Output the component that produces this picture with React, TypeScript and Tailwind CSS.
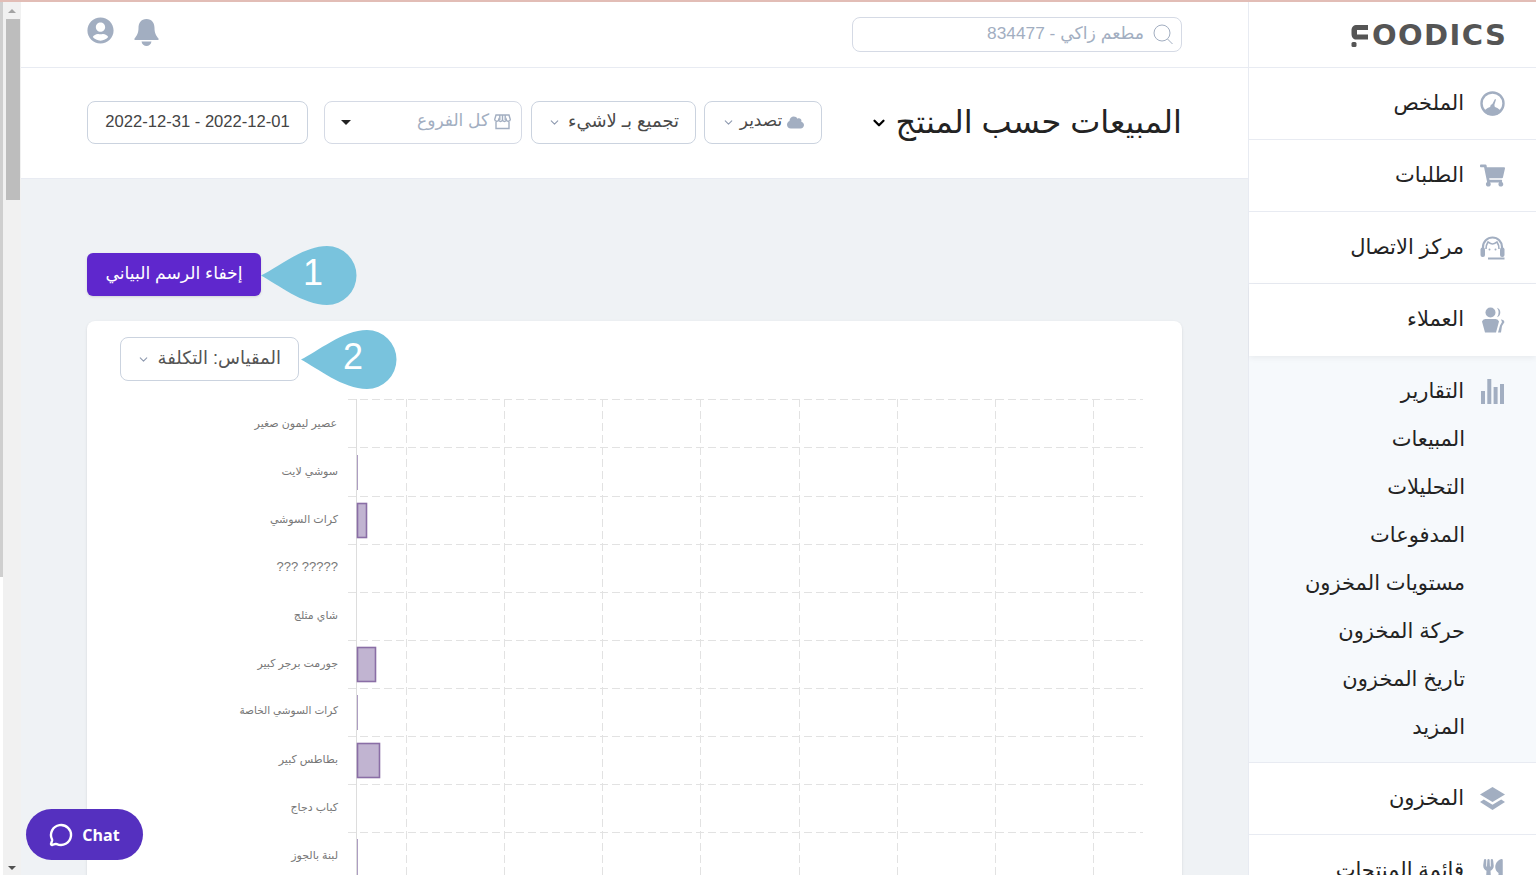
import React from 'react'
import { ChevronDown, MessageCircle } from 'lucide-react'
import { FaCloud, FaShoppingCart, FaUserCircle, FaUtensils } from 'react-icons/fa'

const GaugeIcon = () => (
  <svg width="25" height="25" viewBox="0 0 25 25" fill="none">
    <circle cx="12.5" cy="12.5" r="11" stroke="currentColor" strokeWidth="2.4" />
    <path d="M4 20.5a11 11 0 0 0 17 0a10 10 0 0 0-17 0Z" fill="currentColor" />
    <path d="M11 15.5l4-7.5 1 .5-2.5 8Z" fill="currentColor" />
    <circle cx="12.5" cy="15.5" r="2.2" fill="currentColor" />
  </svg>
)

const HeadsetIcon = () => (
  <svg width="25" height="24" viewBox="0 0 25 24" fill="none">
    <path d="M3 12.5V11a9.500 9.500 0 0 1 19 0v1.500" stroke="currentColor" strokeWidth="2.2" />
    <path d="M6 13C6 9.500 7 7.500 8 6c1.500 1 3 2 4.500 2s3-1 4.500-2c1 1.500 2 3.500 2 7" stroke="currentColor" strokeWidth="1.600" />
    <rect x="0.500" y="11.500" width="4.500" height="9.500" rx="2" fill="currentColor" />
    <rect x="20" y="11.500" width="4.500" height="9.500" rx="2" fill="currentColor" />
    <path d="M8 21.500h16.500v2H8Z" fill="currentColor" />
    <circle cx="9.500" cy="13.500" r="1" fill="currentColor" />
    <circle cx="15.500" cy="13.500" r="1" fill="currentColor" />
  </svg>
)

const UsersIcon = () => (
  <svg width="24" height="26" viewBox="0 0 24 26" fill="currentColor">
    <circle cx="9.500" cy="5.500" r="5" />
    <path d="M16 .800a5 5 0 0 1 0 9.400 8 8 0 0 0 0-9.400Z" />
    <path d="M1 14.500a3.500 3.500 0 0 1 3.500-2.500h10a3.500 3.500 0 0 1 3.500 2.500L15 25.500H4Z" />
    <path d="M20 12.500h.5a3 3 0 0 1 3 2.500l-2.500 4-1 6.500h-3l2-7 2-3.500Z" />
  </svg>
)

const BarsIcon = () => (
  <svg width="23" height="25" viewBox="0 0 23 25" fill="currentColor">
    <rect x="0" y="12" width="4" height="13" />
    <rect x="6.300" y="0" width="4" height="25" />
    <rect x="12.600" y="8" width="4" height="17" />
    <rect x="19" y="5" width="4" height="20" />
  </svg>
)

const LayersIcon = () => (
  <svg width="25" height="23" viewBox="0 0 25 23" fill="currentColor">
    <path d="M12.500 0L25 7.500 12.500 15 0 7.500Z" />
    <path d="M3.800 12.500l8.700 5.200 8.700-5.200L25 15 12.500 23 0 15Z" />
  </svg>
)

const BellIcon = () => (
  <svg width="25" height="27" viewBox="0 0 25 27" fill="currentColor">
    <path d="M12.500 0C18 0 20.500 4 20.500 9c0 5 1.500 7.500 4 10.500v1.500H.5v-1.500C3 16.500 4.500 14 4.500 9c0-5 2.500-9 8-9Z" />
    <path d="M7.500 22.500h10c-.5 2.800-2.500 4.500-5 4.500s-4.500-1.700-5-4.500Z" />
  </svg>
)

const StoreIcon = () => (
  <svg width="17" height="16" viewBox="0 0 17 16" fill="none" stroke="currentColor" strokeWidth="1.400">
    <path d="M2 1h13l1.300 4.500a2 2 0 0 1-3.900.4 2 2 0 0 1-3.900 0 2 2 0 0 1-3.900 0 2 2 0 0 1-3.900-.4Z" />
    <path d="M2 8v6.500h13V8M5.800 1v5M8.500 1v5M11.200 1v5" />
  </svg>
)

const SearchIcon = () => (
  <svg width="21" height="21" viewBox="0 0 21 21" fill="none" stroke="currentColor" strokeWidth="1">
    <circle cx="9" cy="9" r="8" />
    <path d="M14.500 15l5 5" />
  </svg>
)

const LogoMark = () => (
  <svg width="17" height="23" viewBox="0 0 17 23" fill="#555555" className="mr-[4px]">
    <path d="M17 1H6C2.500 1 .5 3 .5 6.500v3C.5 13 2 15.500 5 15.500h12v-5H6V6h11Z" />
    <rect x="0.500" y="18" width="5" height="5" rx="1.500" />
  </svg>
)

const navTop = [
  { label: 'الملخص', icon: <GaugeIcon /> },
  { label: 'الطلبات', icon: <FaShoppingCart size={25} /> },
  { label: 'مركز الاتصال', icon: <HeadsetIcon /> },
  { label: 'العملاء', icon: <UsersIcon /> },
]

const reportLinks = ['المبيعات', 'التحليلات', 'المدفوعات', 'مستويات المخزون', 'حركة المخزون', 'تاريخ المخزون', 'المزيد']

const gridRows = [399.5, 447.5, 496.5, 544.5, 592.5, 640.5, 688.5, 736.5, 784.5, 832.5]
const gridCols = [406.5, 504.5, 602.5, 700.5, 799.5, 897.5, 995.5, 1093.5]

const chartRows = [
  { label: 'عصير ليمون صغير', y: 427, x: 337, size: 11 },
  { label: 'سوشي لايت', y: 475, x: 338, size: 11 },
  { label: 'كرات السوشي', y: 523, x: 338, size: 11 },
  { label: '????? ???', y: 571, x: 338, size: 13 },
  { label: 'شاي مثلج', y: 619, x: 338, size: 11 },
  { label: 'جورمت برجر كبير', y: 667, x: 338, size: 11 },
  { label: 'كرات السوشي الخاصة', y: 714, x: 338, size: 10.5 },
  { label: 'بطاطس كبير', y: 763, x: 338, size: 11 },
  { label: 'كباب دجاج', y: 811, x: 338, size: 11 },
  { label: 'لبنة بالجوز', y: 859, x: 338, size: 11 },
]

const bars = [
  { y: 455, h: 35, w: 1 },
  { y: 503, h: 34, w: 9 },
  { y: 647, h: 34, w: 18 },
  { y: 695, h: 35, w: 1 },
  { y: 743, h: 34, w: 22 },
  { y: 839, h: 36, w: 1 },
]

function Chart() {
  return (
    <svg width="1095" height="480" viewBox="87 395 1095 480" className="block mt-[14px]">
      {gridRows.map((y) => (
        <line key={y} x1="348" x2="1143" y1={y} y2={y} stroke="#e2e2e2" strokeDasharray="8 4" />
      ))}
      {gridCols.map((x) => (
        <line key={x} x1={x} x2={x} y1="399" y2="875" stroke="#e2e2e2" strokeDasharray="8 4" />
      ))}
      <line x1="356.500" x2="356.500" y1="399" y2="875" stroke="#dddddd" />
      {bars.map((b) =>
        b.w === 1 ? (
          <rect key={b.y} x="357" y={b.y} width="1" height={b.h} fill="#ad9dc2" />
        ) : (
          <rect key={b.y} x="357.500" y={b.y + 0.5} width={b.w} height={b.h} fill="#c1b4d1" stroke="#8a6ea6" strokeWidth="1.600" />
        ),
      )}
      {chartRows.map((r) => (
        <text key={r.label} x={r.x} y={r.y} fontSize={r.size} fill="#777777" textAnchor="start" direction="rtl">
          {r.label}
        </text>
      ))}
    </svg>
  )
}

function Callout({ n, className }: { n: string; className: string }) {
  return (
    <div className={`absolute w-[96px] h-[60px] ${className}`}>
      <svg width="96" height="60" viewBox="0 0 96 60" className="absolute inset-0">
        <path d="M0 29.500C16 22 42 0 66 0a29.500 29.500 0 0 1 0 59C42 59 16 38 0 29.500Z" fill="#79c3dd" />
      </svg>
      <span dir="ltr" className="absolute left-[40px] w-[24px] top-[5px] text-center text-[36px] leading-[44px] text-white">
        {n}
      </span>
    </div>
  )
}

function Sidebar() {
  return (
    <aside className="w-[288px] shrink-0 border-l border-[#e8ebf2] bg-white text-[21px] text-[#232323]">
      <div dir="ltr" className="h-[66px] border-b border-[#e8ebf2] flex items-center justify-end pr-[30px] pt-[1px]">
        <LogoMark />
        <span className="font-['DejaVu_Sans',sans-serif] font-bold text-[29px] leading-none text-[#555555] w-[134px] whitespace-nowrap text-right tracking-[1.4px]">
          OODICS
        </span>
      </div>
      {navTop.map((item, i) => (
        <div
          key={item.label}
          className={`h-[72px] flex items-center pr-[31px] gap-[16px] ${i === 3 ? 'relative shadow-[0_2px_6px_rgba(0,0,0,0.06)]' : 'border-b border-[#e8ebf2]'}`}
        >
          <span className="w-[25px] flex justify-center text-[#a2aec1]">{item.icon}</span>
          <span className="-mt-[2px]">{item.label}</span>
        </div>
      ))}
      <div className="bg-[#f6f9fc] border-b border-[#e8ebf2] pt-[11px] pb-[11px]">
        <div className="h-[48px] flex items-center pr-[31px] gap-[16px]">
          <span className="w-[25px] flex justify-center text-[#a2aec1]"><BarsIcon /></span>
          <span>التقارير</span>
        </div>
        {reportLinks.map((label) => (
          <div key={label} className="h-[48px] flex items-center pr-[71px]">{label}</div>
        ))}
      </div>
      <div className="h-[72px] flex items-center pr-[31px] gap-[16px] border-b border-[#e8ebf2]">
        <span className="w-[25px] flex justify-center text-[#a2aec1]"><LayersIcon /></span>
        <span className="-mt-[2px]">المخزون</span>
      </div>
      <div className="h-[72px] flex items-center pr-[31px] gap-[16px]">
        <span className="w-[25px] flex justify-center text-[#a2aec1]"><FaUtensils size={24} /></span>
        <span className="-mt-[2px]">قائمة المنتجات</span>
      </div>
    </aside>
  )
}

export default function App() {
  return (
    <div dir="rtl" className="relative h-[875px] overflow-hidden bg-white font-['Liberation_Sans','DejaVu_Sans',sans-serif]">
      <div className="h-[2px] bg-[#e2bdb6]" />
      <div className="flex h-[873px]">
        <Sidebar />

        <main className="flex-1 min-w-0 flex flex-col">
          <header className="h-[66px] shrink-0 border-b border-[#e8ebf2] px-[66px] flex items-start justify-between pt-[15px]">
            <div className="w-[330px] h-[35px] border border-[#d5dae5] rounded-lg flex items-center pr-[7px] gap-[9px] text-[17.3px] text-[#a2aec1]">
              <SearchIcon />
              <span className="-mt-[2px]">مطعم زاكي - 834477</span>
            </div>
            <div className="flex items-start gap-[20px] text-[#a2aec1]">
              <span className="mt-[2px]"><BellIcon /></span>
              <FaUserCircle size={27} />
            </div>
          </header>

          <section className="h-[111px] shrink-0 border-b border-[#e8ebf2] px-[66px] flex items-center justify-between pb-[2px]">
            <div className="flex items-center gap-[8px] text-[32px] leading-none text-[#232323] -mt-[1px]">
              <span>المبيعات حسب المنتج</span>
              <ChevronDown size={18} strokeWidth={3} className="text-black mt-[3px]" />
            </div>
            <div className="flex items-center text-[#4a4a4a]">
              <button className="w-[118px] h-[43px] border border-[#cbd3df] rounded-lg flex items-center justify-center gap-[5px] text-[17px]">
                <FaCloud size={17} className="text-[#a2aec1]" />
                <span className="-mt-[2px]">تصدير</span>
                <ChevronDown size={13} className="text-[#8f9bb0]" />
              </button>
              <button className="mr-[8px] w-[165px] h-[43px] border border-[#cbd3df] rounded-lg flex items-center justify-center gap-[7px] text-[18px]">
                <span className="-mt-[2px]">تجميع بـ لاشيء</span>
                <ChevronDown size={13} className="text-[#8f9bb0]" />
              </button>
              <button className="mr-[9px] w-[198px] h-[43px] border border-[#d5dae5] rounded-lg flex items-center pr-[10px] text-[17px] text-[#a2aec1]">
                <StoreIcon />
                <span className="mr-[5px] -mt-[2px]">كل الفروع</span>
                <span className="mr-auto ml-[16px] w-0 h-0 border-x-[5.5px] border-x-transparent border-t-[5px] border-t-[#222222]" />
              </button>
              <button className="mr-[16px] w-[221px] h-[43px] border border-[#cbd3df] rounded-lg flex items-center justify-center text-[16.6px] text-[#444444]">
                <span dir="ltr">2022-12-31 - 2022-12-01</span>
              </button>
            </div>
          </section>

          <div className="relative flex-1 min-h-0 bg-[#eff2f5] px-[66px] pt-[74px]">
            <div className="flex justify-end">
              <button className="w-[174px] h-[43px] rounded-md bg-[#5f27cd] text-white text-[17.2px] pb-[2px] shadow-sm">إخفاء الرسم البياني</button>
            </div>
            <div className="mt-[25px] bg-white rounded-lg shadow-sm pt-[16px] h-[600px]">
              <div className="flex justify-end pl-[33px]">
                <button className="w-[179px] h-[44px] border border-[#cbd3df] rounded-lg flex items-center pr-[17px] gap-[8px] text-[18px] text-[#555555]">
                  <span className="-mt-[2px]">المقياس: التكلفة</span>
                  <ChevronDown size={13} className="text-[#8f9bb0]" />
                </button>
              </div>
              <Chart />
            </div>
            <Callout n="1" className="left-[240px] top-[67px]" />
            <Callout n="2" className="left-[280px] top-[151px]" />
          </div>
        </main>

        <div className="w-[21px] shrink-0 flex flex-row-reverse bg-white">
          <div className="w-[3px] bg-[#cfcfcf] h-[575px]" />
          <div className="flex-1 bg-[#f1f1f1] flex flex-col items-center">
            <span className="h-[17px] flex items-center text-[#a0a0a0]">
              <span className="w-0 h-0 border-x-[4px] border-x-transparent border-b-[4px] border-b-[#a3a3a3]" />
            </span>
            <div dir="ltr" className="w-full h-[181px] pl-[3px] pr-[1px]">
              <div className="w-full h-full bg-[#bdbdbd]" />
            </div>
            <span className="mt-auto mb-[5px] w-0 h-0 border-x-[4px] border-x-transparent border-t-[4px] border-t-[#505050]" />
          </div>
        </div>
      </div>

      <div dir="ltr" className="absolute left-[26px] top-[809px] w-[117px] h-[51px] rounded-full bg-[#5530bf] flex items-center justify-center gap-[9px] text-white">
        <MessageCircle size={24} strokeWidth={2.4} />
        <span className="font-['Open_Sans',sans-serif] font-bold text-[16px]">Chat</span>
      </div>
    </div>
  )
}
